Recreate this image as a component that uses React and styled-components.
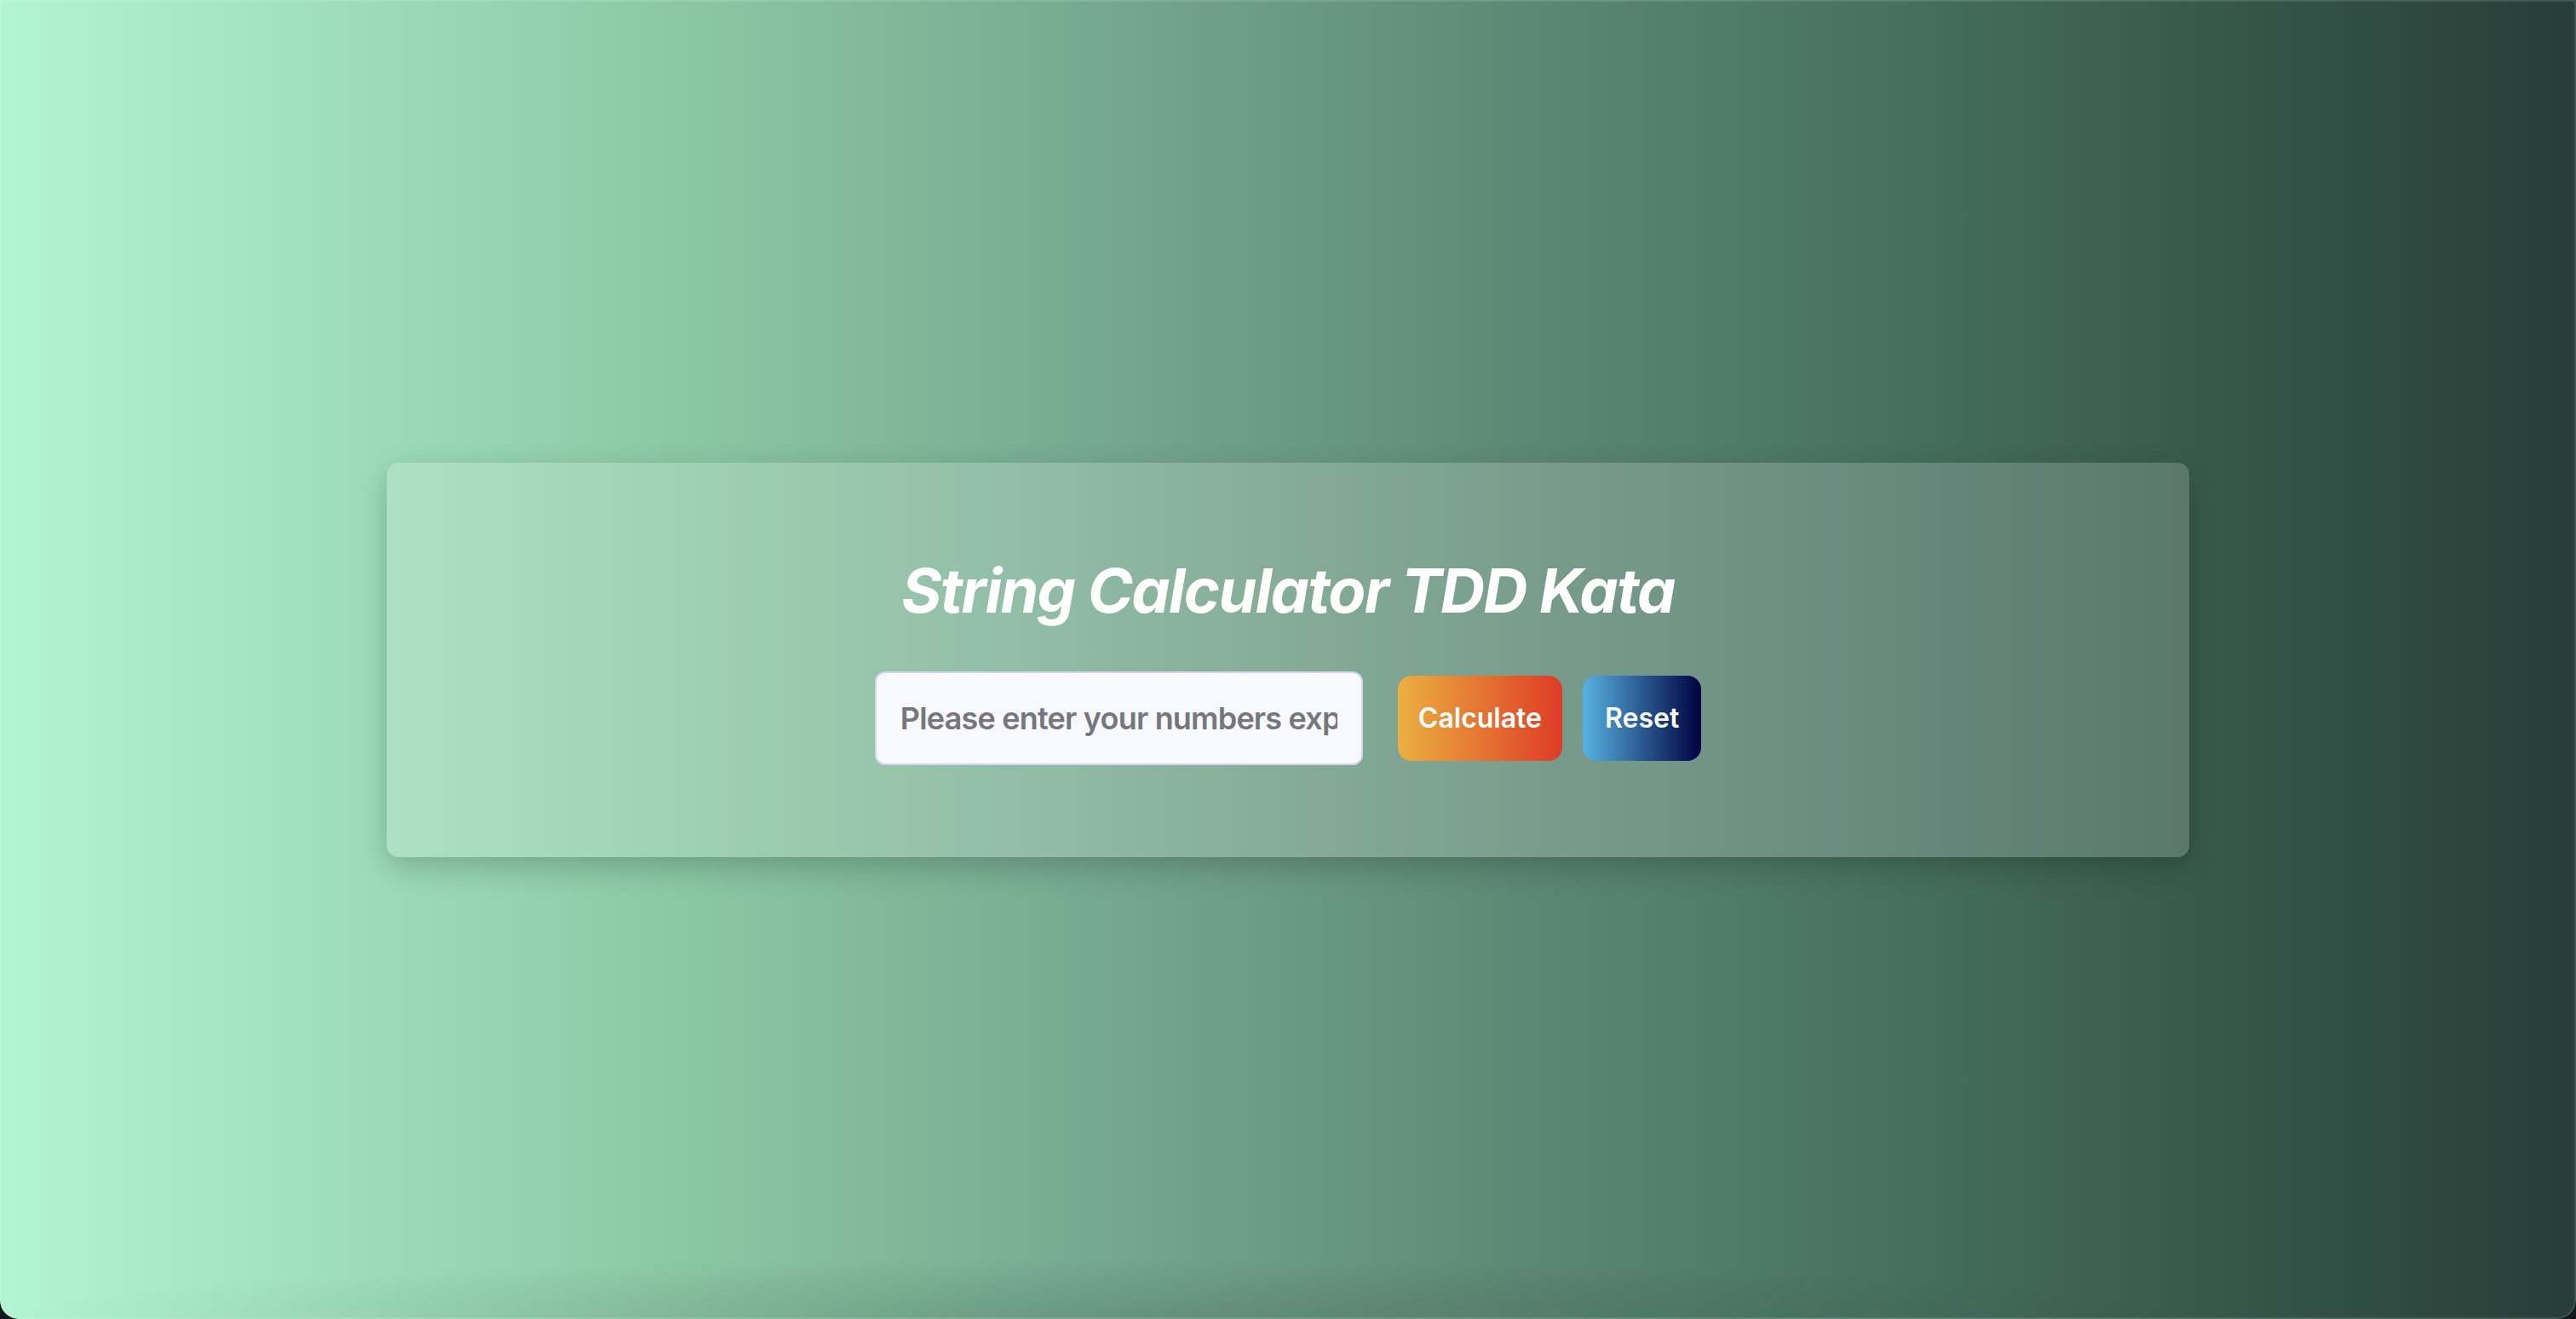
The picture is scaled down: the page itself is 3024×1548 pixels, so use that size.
import React, { useState } from "react";
import styled, { createGlobalStyle } from "styled-components";

const GlobalStyle = createGlobalStyle`
  html, body {
    margin: 0;
    padding: 0;
    background: #12161d;
    font-family: Inter, "Noto Sans", "Liberation Sans", sans-serif;
  }
  #root {
    min-height: 100vh;
  }
  * { box-sizing: border-box; }
`;

const Page = styled.main`
  height: 100vh;
  display: flex;
  align-items: center;
  justify-content: center;
  border-radius: 0 0 22px 22px;
  background:
    radial-gradient(ellipse 1300px 70px at 1300px 100%, rgba(0, 0, 0, 0.12), rgba(0, 0, 0, 0) 100%),
    linear-gradient(
      to right,
      #b2f5d1 0%,
      #9edcb9 14%,
      #8bc6a2 27%,
      #79ae93 40%,
      #6b9a82 50%,
      #5a8773 60%,
      #487363 72%,
      #385a4d 85%,
      #273d37 100%
    );
  box-shadow: inset 0 0 0 2px rgba(255, 255, 255, 0.12);
`;

const Card = styled.section`
  width: 2116px;
  height: 463px;
  padding: 106px 0 0;
  display: flex;
  flex-direction: column;
  align-items: center;
  gap: 52px;
  border-radius: 14px;
  background: rgba(255, 255, 255, 0.18);
  box-shadow: 0 12px 34px rgba(0, 0, 0, 0.2);
`;

const Title = styled.h1`
  margin: 0;
  font-family: Inter, "Noto Sans", sans-serif;
  font-size: 72px;
  line-height: 87px;
  font-weight: 700;
  font-style: italic;
  letter-spacing: -1.7px;
  color: #ffffff;
`;

const Row = styled.div`
  display: flex;
  align-items: center;
`;

const Input = styled.input`
  width: 573px;
  height: 110px;
  margin-right: 41px;
  padding: 0 28px;
  border: 2px solid #d5d3ee;
  border-radius: 12px;
  background: #f8f8ff;
  font-family: Inter, "Noto Sans", sans-serif;
  font-size: 36px;
  font-weight: 600;
  letter-spacing: -0.8px;
  color: #333;
  outline: none;
  &::placeholder {
    color: #76767b;
  }
`;

const Button = styled.button`
  height: 100px;
  padding: 0 ${(p) => p.$px}px;
  margin-left: ${(p) => p.$ml}px;
  border: none;
  border-radius: 16px;
  background: ${(p) => p.$bg};
  color: #ffffff;
  font-family: Inter, "Noto Sans", sans-serif;
  font-size: 32px;
  font-weight: 600;
  cursor: pointer;
`;

export default function App() {
  const [value, setValue] = useState("");
  return (
    <>
      <GlobalStyle />
      <Page>
        <Card>
          <Title>String Calculator TDD Kata</Title>
          <Row>
            <Input
              value={value}
              onChange={(e) => setValue(e.target.value)}
              placeholder="Please enter your numbers expression"
            />
            <Button
              $px={24}
              $ml={0}
              $bg="linear-gradient(to right, #ebb040, #de3b26)"
            >
              Calculate
            </Button>
            <Button
              $px={26}
              $ml={24}
              $bg="linear-gradient(to right, #56b2e2, #000140)"
            >
              Reset
            </Button>
          </Row>
        </Card>
      </Page>
    </>
  );
}
